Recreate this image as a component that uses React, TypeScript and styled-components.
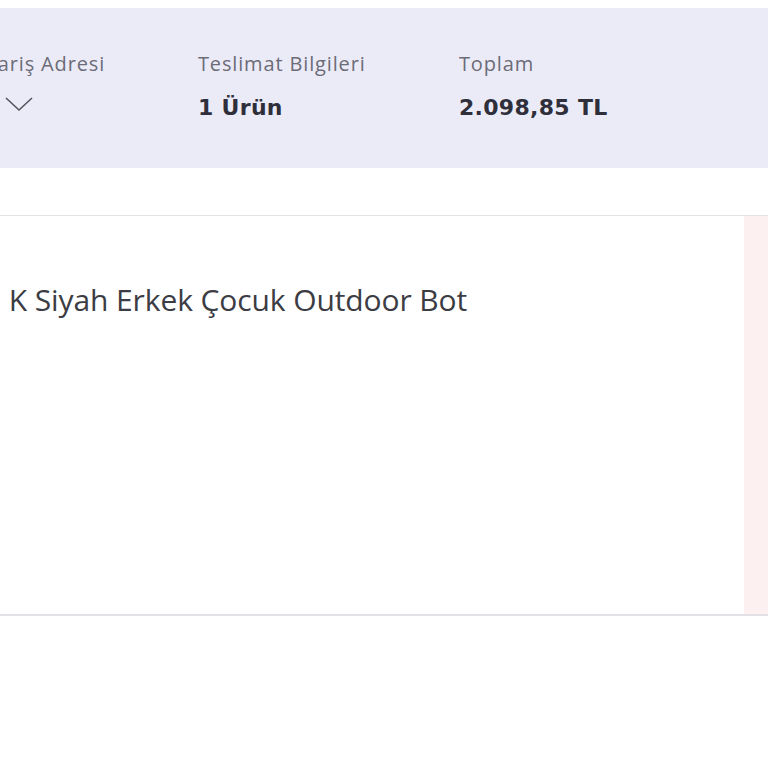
import React from 'react';
import styled, { createGlobalStyle } from 'styled-components';

const GlobalStyle = createGlobalStyle`
  html, body {
    margin: 0;
    padding: 0;
    background: #ffffff;
    overflow: hidden;
  }
  body {
    font-family: "Open Sans", Lato, sans-serif;
    color: #3a3a46;
  }
`;

const Page = styled.div`
  width: 768px;
  height: 768px;
  padding-top: 8px;
  box-sizing: border-box;
  overflow: hidden;
`;

const SummaryBar = styled.div`
  height: 160px;
  background: #ebebf7;
  display: flex;
  align-items: flex-start;
  padding-top: 42px;
  box-sizing: border-box;
  margin-left: -33px;
`;

const SummaryItem = styled.div<{ width: number }>`
  width: ${p => p.width}px;
  display: flex;
  flex-direction: column;
  gap: 15px;
`;

const Label = styled.div`
  font-size: 20px;
  line-height: 28px;
  letter-spacing: 0.85px;
  color: #6c6c78;
  white-space: nowrap;
`;

const Value = styled.div`
  font-family: "DejaVu Sans", "Open Sans", sans-serif;
  font-size: 22px;
  line-height: 30px;
  font-weight: 700;
  letter-spacing: 0.3px;
  color: #2f2f3b;
  white-space: nowrap;
`;

const Chevron = styled.svg`
  margin-left: 37px;
  margin-top: 3px;
`;

const ProductCard = styled.div`
  margin-top: 47px;
  height: 398px;
  border-top: 1px solid #e2e2e6;
  border-bottom: 2px solid #e2e2e6;
  display: flex;
`;

const ProductBody = styled.div`
  flex: 1;
  padding-top: 64px;
  margin-left: -47px;
`;

const ProductName = styled.div`
  font-size: 30px;
  line-height: 40px;
  letter-spacing: -0.1px;
  color: #3c3c44;
  white-space: nowrap;
`;

const SideStrip = styled.div`
  width: 24px;
  background: #fdf0f0;
`;

export default function App() {
  return (
    <>
      <GlobalStyle />
      <Page>
        <SummaryBar>
          <SummaryItem width={231}>
            <Label>Sipariş Adresi</Label>
            <Chevron width="30" height="18" viewBox="0 0 30 18" fill="none">
              <path d="M2 2 L15 14 L28 2" stroke="#55555f" strokeWidth="1.6" />
            </Chevron>
          </SummaryItem>
          <SummaryItem width={261}>
            <Label>Teslimat Bilgileri</Label>
            <Value>1 Ürün</Value>
          </SummaryItem>
          <SummaryItem width={200}>
            <Label>Toplam</Label>
            <Value>2.098,85 TL</Value>
          </SummaryItem>
        </SummaryBar>
        <ProductCard>
          <ProductBody>
            <ProductName>Pro K Siyah Erkek Çocuk Outdoor Bot</ProductName>
          </ProductBody>
          <SideStrip />
        </ProductCard>
      </Page>
    </>
  );
}
